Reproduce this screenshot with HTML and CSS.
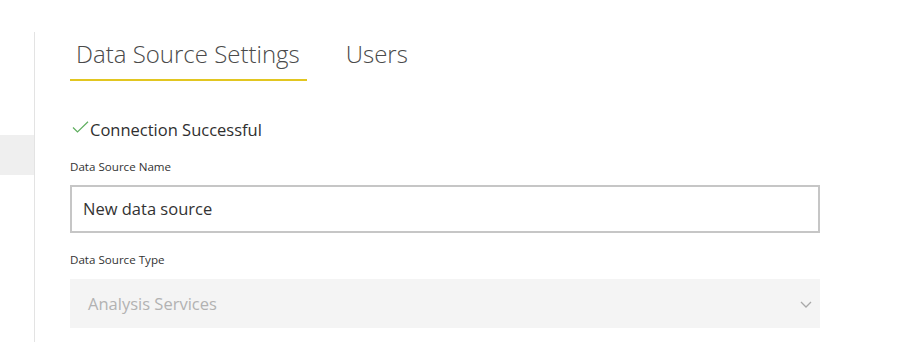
FILE: index.html
```html
<!DOCTYPE html>
<html>
<head>
<meta charset="utf-8">
<link rel="stylesheet" href="styles.css">
</head>
<body>
<div class="page">
  <aside class="sidebar">
    <div class="sidebar-item"></div>
  </aside>
  <main class="main">
    <nav class="tabs">
      <div class="tab tab-active">Data Source Settings</div>
      <div class="tab">Users</div>
    </nav>
    <div class="status">
      <svg class="check" width="17" height="12" viewBox="0 0 17 12"><path d="M1 6.5 L5.5 11 L16 0.8" fill="none" stroke="#5fae5f" stroke-width="1.2"/></svg>
      <span>Connection Successful</span>
    </div>
    <div class="field-label">Data Source Name</div>
    <div class="text-input">New data source</div>
    <div class="field-label">Data Source Type</div>
    <div class="select">
      <span>Analysis Services</span>
      <svg class="chevron" width="12" height="7" viewBox="0 0 12 7"><path d="M1 1 L6 6 L11 1" fill="none" stroke="#a8a8a8" stroke-width="1.3"/></svg>
    </div>
  </main>
</div>
</body>
</html>
```
FILE: styles.css
```css
html, body {
  margin: 0;
  padding: 0;
  background: #ffffff;
}
body {
  font-family: "Open Sans", "Liberation Sans", sans-serif;
  color: #333333;
}
.page {
  display: flex;
  height: 342px;
  overflow: hidden;
}
.sidebar {
  width: 34px;
  flex: none;
  margin-top: 32px;
  padding-top: 103px;
  border-right: 1px solid #e3e3e3;
  box-sizing: content-box;
}
.sidebar-item {
  height: 40px;
  background: #efefef;
}
.main {
  padding-left: 35px;
  padding-top: 38px;
  width: 750px;
}
.tabs {
  display: flex;
  gap: 33px;
}
.tab {
  font-size: 24px;
  font-weight: 300;
  line-height: 32px;
  color: #4a4a4a;
  padding: 0 7px 9px 6px;
  border-bottom: 2px solid transparent;
}
.tab-active {
  border-bottom-color: #e2c620;
}
.status {
  display: flex;
  align-items: center;
  margin-top: 39px;
  font-size: 16.5px;
  line-height: 20px;
  color: #2f2f2f;
}
.check {
  margin-left: 2px;
  margin-right: 1px;
  margin-top: -6px;
}
.field-label {
  font-size: 11.6px;
  line-height: 16px;
  margin-top: 19px;
  color: #333333;
}
.text-input {
  margin-top: 10px;
  height: 44px;
  border: 2px solid #c6c6c6;
  padding-left: 11px;
  font-size: 16.5px;
  line-height: 44px;
  color: #333333;
}
.select {
  margin-top: 11px;
  height: 49px;
  background: #f4f4f4;
  display: flex;
  align-items: center;
  justify-content: space-between;
  padding-left: 18px;
  padding-right: 8px;
  font-size: 16.5px;
  color: #b2b2b2;
}
.chevron {
  margin-top: 2px;
}
```
